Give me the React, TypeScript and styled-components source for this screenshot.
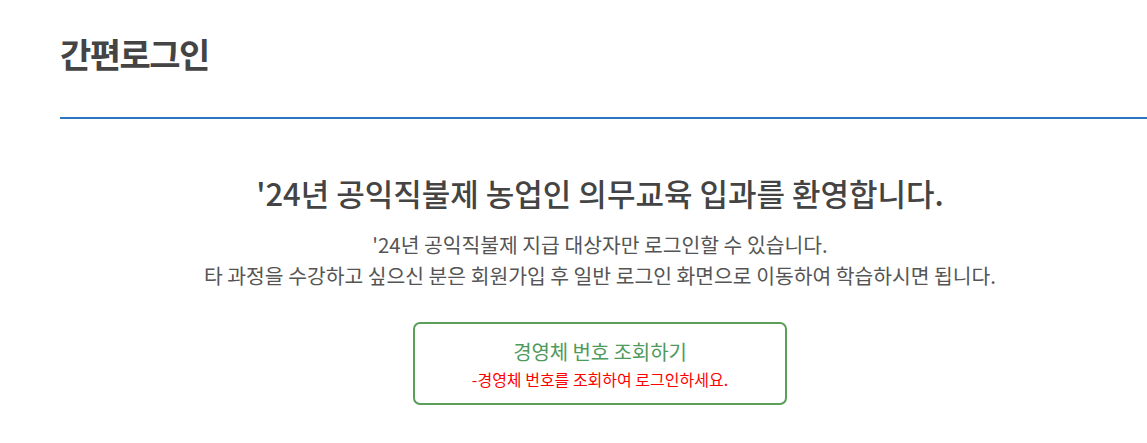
import React from "react";
import styled, { createGlobalStyle } from "styled-components";

const GlobalStyle = createGlobalStyle`
  html, body {
    margin: 0;
    padding: 0;
    background: #fff;
    font-family: "Noto Sans CJK KR", "Noto Sans", sans-serif;
    overflow: hidden;
  }
`;

export default function App() {
  return (
    <>
      <GlobalStyle />
      <Page>
        <Header>
          <Title>간편로그인</Title>
        </Header>
        <Content>
          <Welcome>'24년 공익직불제 농업인 의무교육 입과를 환영합니다.</Welcome>
          <Notice>
            '24년 공익직불제 지급 대상자만 로그인할 수 있습니다.
            <br />
            타 과정을 수강하고 싶으신 분은 회원가입 후 일반 로그인 화면으로 이동하여 학습하시면 됩니다.
          </Notice>
          <LookupButton type="button">
            <ButtonLabel>경영체 번호 조회하기</ButtonLabel>
            <ButtonHint>-경영체 번호를 조회하여 로그인하세요.</ButtonHint>
          </LookupButton>
        </Content>
      </Page>
    </>
  );
}

const Page = styled.div`
  padding-left: 60px;
  width: 1087px;
`;

const Header = styled.div`
  padding-top: 29px;
  height: 88px;
  border-bottom: 2px solid #2b78c0;
`;

const Title = styled.h1`
  margin: 0;
  font-size: 34px;
  font-weight: 700;
  color: #444;
  letter-spacing: -1.5px;
  line-height: 50px;
`;

const Content = styled.div`
  width: 1080px;
  display: flex;
  flex-direction: column;
  align-items: center;
  padding-top: 51px;
`;

const Welcome = styled.h2`
  margin: 0;
  font-size: 31px;
  font-weight: 500;
  color: #444;
  line-height: 46px;
`;

const Notice = styled.p`
  margin: 13px 0 0;
  font-size: 20.4px;
  color: #555;
  text-align: center;
  line-height: 31px;
`;

const LookupButton = styled.button`
  margin-top: 31px;
  width: 374px;
  height: 83px;
  border: 2px solid #5a9e5a;
  border-radius: 7px;
  background: #fff;
  display: flex;
  flex-direction: column;
  align-items: center;
  justify-content: center;
  gap: 1px;
  font-family: inherit;
  cursor: pointer;
`;

const ButtonLabel = styled.span`
  font-size: 20px;
  color: #4e9a5b;
  letter-spacing: -0.1px;
`;

const ButtonHint = styled.span`
  font-size: 16px;
  color: #f00;
`;
